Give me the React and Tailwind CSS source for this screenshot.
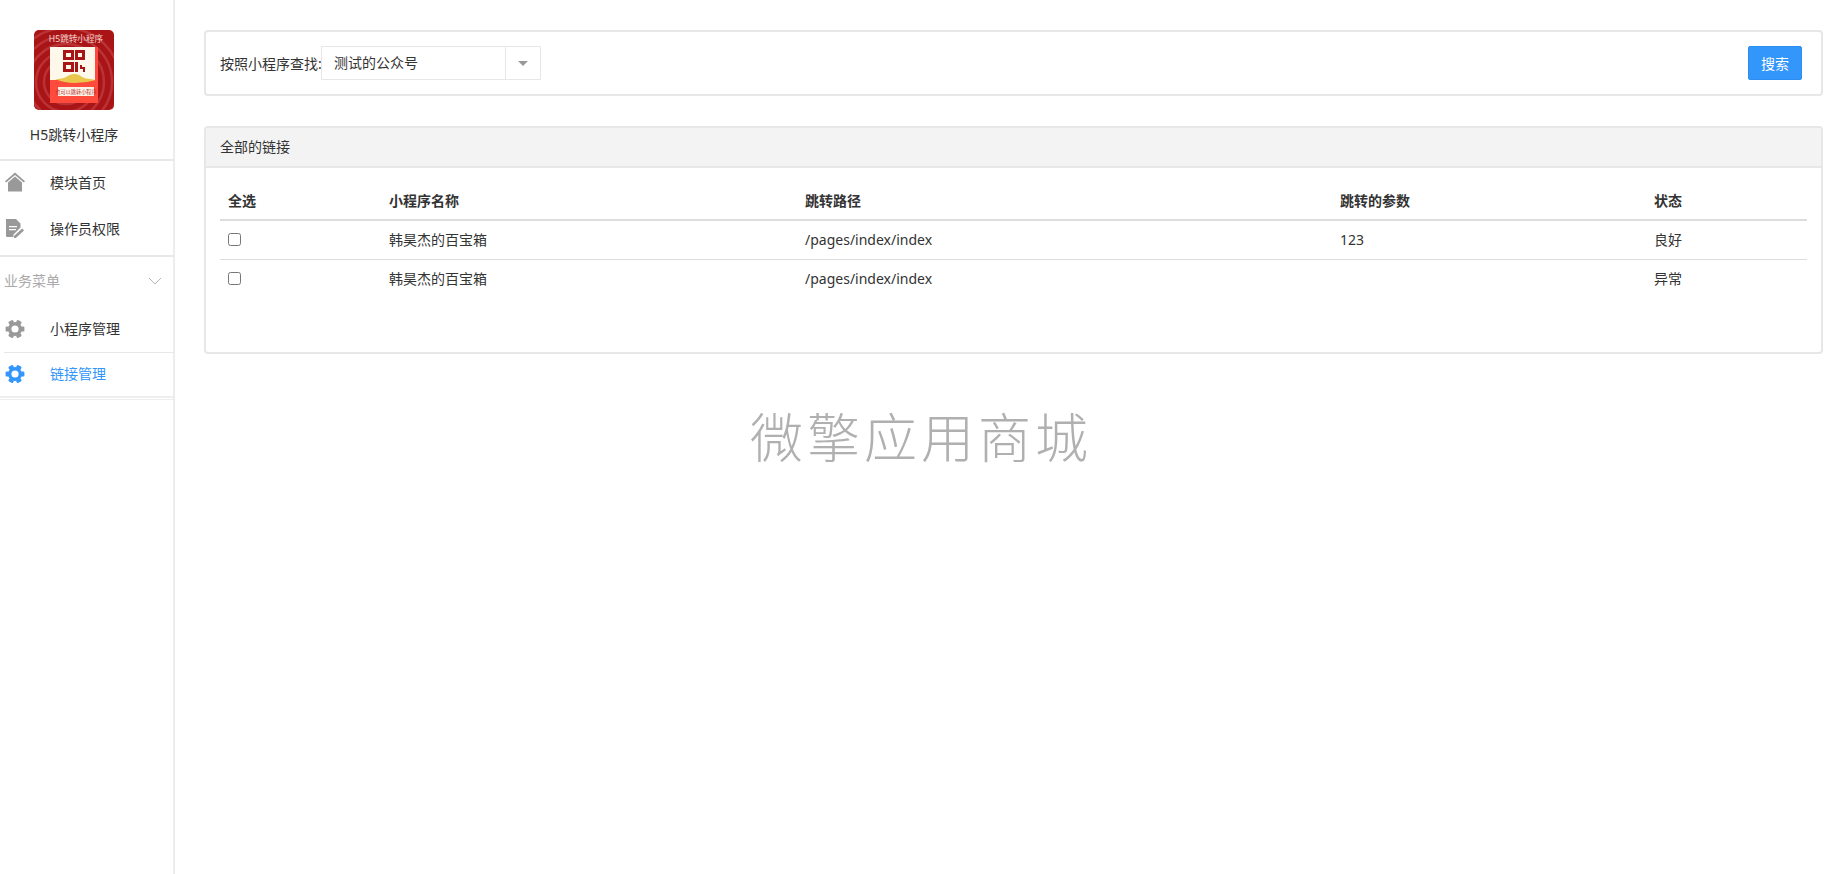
import React from 'react';

const rows = [
  { name: '韩昊杰的百宝箱', path: '/pages/index/index', params: '123', status: '良好' },
  { name: '韩昊杰的百宝箱', path: '/pages/index/index', params: '', status: '异常' },
];

const GearIcon = ({ color }) => (
  <svg width="20" height="20" viewBox="0 0 20 20" fill={color}>
    <circle cx="10" cy="10" r="7" />
    {[0, 60, 120, 180, 240, 300].map((deg) => (
      <rect key={deg} x="16" y="7.4" width="3.4" height="5.2" rx="1.2" transform={`rotate(${deg} 10 10)`} />
    ))}
    <circle cx="10" cy="10" r="3.6" fill="#ffffff" />
  </svg>
);

const HomeIcon = () => (
  <svg width="20" height="20" viewBox="0 0 20 20" fill="#999999">
    <path d="M10 0.5 20 9.2l-1.2 1.3L10 3 1.2 10.5 0 9.2z" />
    <path d="M10 4.6 17 10.6V19.5H3V10.6z" />
  </svg>
);

const DocIcon = () => (
  <svg width="20" height="20" viewBox="0 0 20 20">
    <path fill="#999999" d="M1 1h10l4.5 4.5v4L8.5 16.5V19H2.2A1.2 1.2 0 0 1 1 17.8z" />
    <path fill="#fff" d="M4 8h8v1.3H4zM4 11h7v1.3H4z" />
    <path fill="#999999" d="M17.2 10.6 19 12.4 10.8 20H9v-1.9z" />
  </svg>
);

const Logo = () => (
  <svg width="80" height="80" viewBox="0 0 80 80" className="block rounded-[5px]">
    <rect width="80" height="80" fill="#a91516" />
    <g fill="none" stroke="#bb3236" strokeWidth="2.5">
      <circle cx="32" cy="52" r="22" />
      <circle cx="32" cy="52" r="30" />
      <circle cx="32" cy="52" r="38" />
      <circle cx="32" cy="52" r="46" />
      <circle cx="32" cy="52" r="54" />
    </g>
    <rect x="16" y="17" width="48" height="56" fill="#ff4b3c" />
    <rect x="16" y="17" width="45" height="33" fill="#fdf8ea" />
    <path d="M21 49q7 0 11-2 4-3 8-3 5 0 8 3 4 2 8 2l6 1q-10 3-21 3t-20-4z" fill="#e9c64c" />
    <g fill="#a91516">
      <path fillRule="evenodd" d="M29 20h11v10H29zM32 23v4h5v-4z" />
      <path fillRule="evenodd" d="M41 20h10v10H41zM44 23v4h4v-4z" />
      <path fillRule="evenodd" d="M29 32h11v10H29zM32 35v4h5v-4z" />
      <path d="M41 32h3v10h-3zM46 35h2v2h3v5h-2v-3h-3z" />
    </g>
    <rect x="24" y="57" width="36" height="9" fill="#fdf1e6" />
    <text x="42" y="63.5" textAnchor="middle" fontSize="5.2" fill="#b7322f">也可以跳转小程序</text>
    <text x="42" y="12" textAnchor="middle" fontSize="8.6" fill="#f3d0cc">H5跳转小程序</text>
  </svg>
);

const MenuItem = ({ icon, label, active, className }) => (
  <div className={`flex items-center pl-[5px] ${className}`}>
    <span className="w-[45px] flex shrink-0">{icon}</span>
    <span className={active ? 'text-[#3296fa]' : 'text-[#333333]'}>{label}</span>
  </div>
);

const App = () => {
  return (
    <div
      className="flex h-[874px] bg-white text-[14px] text-[#333333] overflow-hidden"
      style={{ fontFamily: '"Noto Sans", "Noto Sans CJK SC", sans-serif' }}
    >
      {/* Sidebar */}
      <aside className="w-[175px] shrink-0 border-r-2 border-[#ececec] flex flex-col">
        <div className="h-[161px] border-b-2 border-[#e7e7e7] pt-[30px]">
          <div className="w-[148px] flex flex-col items-center">
            <Logo />
            <p className="mt-[14px] leading-[22px] whitespace-nowrap">H5跳转小程序</p>
          </div>
        </div>
        <MenuItem icon={<HomeIcon />} label="模块首页" className="h-[46px] pb-[4px]" />
        <MenuItem icon={<DocIcon />} label="操作员权限" className="h-[46px] pb-[4px]" />
        <div className="h-[2px] mt-[2px] bg-[#e7e7e7]" />
        <div className="flex items-center justify-between h-[49px] pb-[2px] pl-[4px] pr-[11px] text-[#aaaaaa]">
          <span>业务菜单</span>
          <svg width="14" height="8" viewBox="0 0 14 8" fill="none" stroke="#b5b5b5" strokeWidth="1">
            <path d="M1 1l6 6 6-6" />
          </svg>
        </div>
        <MenuItem icon={<GearIcon color="#999999" />} label="小程序管理" className="h-[46px] pb-[1px]" />
        <div className="h-[1px] ml-[4px] bg-[#e7e7e7]" />
        <MenuItem icon={<GearIcon color="#3296fa" />} label="链接管理" active className="h-[43px] pb-[2px]" />
        <div className="h-[2px] bg-[#eeeeee]" />
        <div className="h-[1px] mt-[1px] bg-[#eeeeee]" />
      </aside>

      {/* Main */}
      <main className="flex-1 min-w-0 pl-[29px] pr-[14px] pt-[30px]">
        <div className="h-[66px] border-2 border-[#e7e7e7] rounded-[4px] flex items-center justify-between pl-[14px] pr-[19px]">
          <div className="flex items-center">
            <span className="w-[101px] whitespace-nowrap">按照小程序查找:</span>
            <div className="flex w-[220px] h-[34px] border border-[#e7e7e7]">
              <span className="flex-1 pl-[12px] leading-[32px]">测试的公众号</span>
              <span className="w-[35px] border-l border-[#e7e7e7] flex items-center justify-center">
                <span className="w-0 h-0 border-x-[5px] border-x-transparent border-t-[5px] border-t-[#999999]" />
              </span>
            </div>
          </div>
          <button className="w-[54px] h-[34px] bg-[#3296fa] border border-[#2b8ef0] rounded-[2px] text-white">
            搜索
          </button>
        </div>

        <div className="mt-[30px] h-[228px] border-2 border-[#e7e7e7] rounded-[4px] overflow-hidden">
          <div className="h-[40px] bg-[#f3f3f3] border-b-2 border-[#e7e7e7] pl-[14px] leading-[38px]">全部的链接</div>
          <div className="pl-[14px] pr-[14px] pt-[15px]">
            <div className="grid grid-cols-[161px_416px_535px_314px_1fr] h-[38px] pb-[2px] items-center pl-[8px] font-bold border-b-2 border-[#dddddd]">
              <span>全选</span>
              <span>小程序名称</span>
              <span>跳转路径</span>
              <span>跳转的参数</span>
              <span>状态</span>
            </div>
            {rows.map((row, index) => (
              <div
                key={index}
                className={`grid grid-cols-[161px_416px_535px_314px_1fr] h-[39px] pb-[2px] items-center pl-[8px] ${index === 0 ? 'border-b border-[#dddddd]' : ''}`}
              >
                <input type="checkbox" className="w-[13px] h-[13px] m-0" />
                <span>{row.name}</span>
                <span>{row.path}</span>
                <span>{row.params}</span>
                <span>{row.status}</span>
              </div>
            ))}
          </div>
        </div>

        <p className="mt-[50px] ml-[546px] text-[53px] leading-[68px] tracking-[4px] font-light text-[#b0b0b0] whitespace-nowrap">
          微擎应用商城
        </p>
      </main>
    </div>
  );
};

export default App;
